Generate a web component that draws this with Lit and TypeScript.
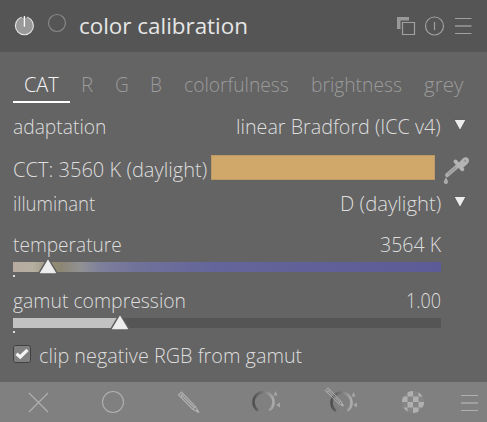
import { LitElement, html, css, svg } from "lit";
import { customElement, property } from "lit/decorators.js";

/** A line of text condensed to an exact advance width. */
@customElement("fit-text")
class FitText extends LitElement {
  @property({ type: Number }) w = 0;
  @property() text = "";
  static styles = css`
    :host { display: block; flex: none; white-space: nowrap; }
    .box { display: block; }
    .ink { display: inline-block; transform-origin: 0 50%; }
  `;
  async updated() {
    await document.fonts.ready;
    const ink = this.renderRoot.querySelector(".ink") as HTMLElement;
    if (ink.offsetWidth) ink.style.transform = `scaleX(${this.w / ink.offsetWidth})`;
  }
  render() {
    return html`<span class="box" style="width:${this.w}px"><span class="ink">${this.text}</span></span>`;
  }
}

const fit = (text: string, w: number, cls = "") =>
  html`<fit-text class=${cls} .w=${w} .text=${text}></fit-text>`;

const tabs: [string, number, number][] = [
  ["CAT", 35, 11], ["R", 12, 11], ["G", 14, 10.5], ["B", 12, 11],
  ["colorfulness", 105, 11], ["brightness", 91, 11], ["grey", 39, 11],
];

const pencil = svg`<g fill="none"><path d="M2 5 5 2 19 16.5 22 22 16.5 19.5Z"/><path d="M4 7 7 4M4.5 4.5 18 18M16.5 19.5 19 16.5"/><path d="M20 20 22 22" stroke-width="2"/></g>`;

const squares: number[][] = [];
for (let r = 0; r < 4; r++) for (let c = 0; c < 4; c++) if ((r + c) % 2 === 1) squares.push([c, r]);

@customElement("app-root")
class AppRoot extends LitElement {
  static styles = css`
    :host {
      display: flex; flex-direction: column; width: 487px; height: 422px; overflow: hidden;
      background: #646464; color: #dedede;
      font: 300 20.5px/28px "Open Sans", "Noto Sans", sans-serif;
    }
    svg { display: block; flex: none; }
    header { height: 52px; box-sizing: border-box; background: #555; display: flex; align-items: flex-start; padding: 0 14px; }
    .power { margin-top: 14px; }
    .mask { margin: 12px 12px 0 12px; }
    .title { font-size: 22px; font-weight: 400; line-height: 28px; color: #e6e6e6; margin-top: 11px; }
    .actions { margin: 16px 0 0 auto; }
    main { flex: 1; padding: 18px 46px 0 13px; display: flex; flex-direction: column; }
    nav { display: flex; height: 33px; color: #9b9b9b; margin-right: -46px; flex: none; }
    .tab { box-sizing: border-box; height: 33px; flex: none; }
    .active { color: #f4f4f4; border-bottom: 2px solid #fff; }
    .row { display: flex; justify-content: space-between; height: 28px; position: relative; flex: none; }
    .adapt { margin-top: 9px; }
    .cct { margin-top: 15px; justify-content: flex-start; }
    .illum { margin-top: 6px; }
    .temp { margin-top: 13px; }
    .gamut { margin-top: 9px; }
    .arrow { position: absolute; left: 440px; top: 7px; }
    .swatch { box-sizing: border-box; width: 224px; height: 25px; background: #d0a869; border: 1px solid #bc9b68; margin-left: 4px; }
    .picker { position: absolute; left: 430px; top: 0; }
    .slider { position: relative; height: 19px; flex: none; display: block; }
    .track { height: 10px; margin-top: 4px; background: #555; }
    .spectrum { background: linear-gradient(90deg, #b8aaa0 0, #b5afa0 20px, #918b73 42px, #8b8573 48px, #929294 67px, #7d7f9b 88px, #71729a 125px, #64659a 200px, #5d5b97 428px); }
    .filled { background: linear-gradient(90deg, #c2c2c2 107px, #555 107px); }
    .dot { width: 2px; height: 2px; background: #ddd; margin-top: 3px; }
    .slider::before { content: ""; display: table; }
    .marker { position: absolute; top: -1px; }
    .m1 { left: 24px; }
    .m2 { left: 96px; }
    .clip { display: flex; margin-top: 8px; flex: none; }
    .check { margin: 4px 8px 0 0; }
    footer { height: 40px; background: #808080; flex: none; }
  `;
  arrow() {
    return html`<svg class="arrow" width="14" height="13" viewBox="0 0 14 13"><path d="M1 .5H13L7 11.5Z" fill="#ececec" stroke="#505050" stroke-width=".8"/></svg>`;
  }
  marker(cls: string) {
    return html`<svg class="marker ${cls}" width="22" height="18" viewBox="0 0 22 18"><path d="M11 .8 20.700 17H1.300Z" fill="#ededed" stroke="#616161" stroke-width="1.500"/></svg>`;
  }
  render() {
    return html`
      <header>
        <svg class="power" width="21" height="22" viewBox="0 0 21 22"><circle cx="10.4" cy="11.8" r="9" fill="#999" stroke="#e4e4e4" stroke-width="1.1"/><path d="M10.4 1V4" stroke="#555" stroke-width="5"/><path d="M7.8 3.6H13V13H7.8Z" fill="#999"/><path d="M10.4 2V12.7" stroke="#fafafa" stroke-width="1.3"/></svg>
        <svg class="mask" width="20" height="22" viewBox="0 0 20 22"><circle cx="10" cy="11" r="8.5" fill="none" stroke="#888" stroke-width="1.2"/></svg>
        ${fit("color calibration", 169, "title")}
        <svg class="actions" width="77" height="21" viewBox="0 0 77 21" fill="none" stroke="#a0a0a0" stroke-width="1.2"><path d="M1 1H13V4.500H4.500V13H1Z" fill="#999" stroke="none"/><path d="M6.5 6.5H18.5V18.5H6.5Z"/><circle cx="38.5" cy="10" r="9"/><path d="M38.5 6V14M59 2.5H75.500M59 17.500H75.500"/><path d="M59 10H75.500" stroke="#888" stroke-width="2"/></svg>
      </header>
      <main>
        <nav>
          ${tabs.map(([t, w, p], i) => html`<div class="tab ${i === 0 ? "active" : ""}" style="padding:0 ${p}px">${fit(t, w)}</div>`)}
        </nav>
        <div class="row adapt">${fit("adaptation", 93)}${fit("linear Bradford (ICC v4)", 205)}${this.arrow()}</div>
        <div class="row cct">${fit("CCT: 3560 K (daylight)", 194)}<div class="swatch"></div>
          <svg class="picker" width="28" height="31" viewBox="0 0 28 31"><path d="M4.200 20 14 11.500" stroke="#aeaeae" stroke-width="4.200" stroke-linecap="round"/><path d="M5 19.300 13 12.300" stroke="#9c9c9c" stroke-width="1.600"/><path d="M12.500 6.500 19.300 14.200" stroke="#b4b4b4" stroke-width="4" stroke-linecap="round"/><path d="M14.500 9 20 3.200C22.500 1 26.300 2.500 26 6 25.800 7.500 24.500 9.500 19 13.500Z" fill="#b4b4b4"/><path d="M21 5 23.200 6.500" stroke="#999" stroke-width="2"/><path d="M3 22C4 24.500 5.200 25.500 5 27.200 4.600 29.600 1.200 29.600 .800 27.200 .600 25.500 2 24.500 3 22Z" fill="#aaa"/></svg>
        </div>
        <div class="row illum">${fit("illuminant", 82.5)}${fit("D (daylight)", 101)}${this.arrow()}</div>
        <div class="row temp">${fit("temperature", 109)}${fit("3564 K", 61)}</div>
        <div class="slider"><div class="track spectrum"></div><div class="dot"></div>${this.marker("m1")}</div>
        <div class="row gamut">${fit("gamut compression", 173)}${fit("1.00", 35)}</div>
        <div class="slider"><div class="track filled"></div><div class="dot"></div>${this.marker("m2")}</div>
        <div class="clip">
          <svg class="check" width="18" height="18" viewBox="0 0 18 18"><rect x=".500" y=".500" width="17" height="17" rx="2" fill="#808080" stroke="#414141"/><path d="M3.500 8.800 7.200 12 14.500 4.800" fill="none" stroke="#f4f4f4" stroke-width="3.200"/></svg>
          ${fit("clip negative RGB from gamut", 263)}
        </div>
      </main>
      <footer>
        <svg width="487" height="40" viewBox="0 0 487 40" fill="none" stroke="#b0b0b0" stroke-width="1.100">
          <defs>
            <linearGradient id="ring" x1="0" x2="1"><stop stop-color="#505050"/><stop offset=".5" stop-color="#7a7a7a"/><stop offset="1" stop-color="#acacac"/></linearGradient>
            <clipPath id="disc"><circle cx="413" cy="20" r="11"/></clipPath>
          </defs>
          <path d="M29 11 48 30M48 11 29 30"/><circle cx="113" cy="20" r="10.500"/>
          <g transform="translate(176.500 8)">${pencil}</g>
          <g stroke="url(#ring)" stroke-width="2.600"><path d="M258 28.500A10 10 0 1 1 269 28.500"/><path d="M336 29A10 10 0 1 1 347 29"/></g>
          <g fill="#a6a6a6" stroke="none"><path d="M273.500 13.500 277.500 13.500 275.500 9ZM276 23 280 20.500V25.500ZM351.500 14.500H355.500L353.500 10ZM353 23 357 20.500V25.500Z"/></g>
          <g transform="translate(323.500 4) scale(.9)">${pencil}</g>
          <g clip-path="url(#disc)" stroke="none"><rect x="402" y="9" width="22" height="22" fill="#868686"/>${squares.map(([c, r]) => svg`<rect x=${402 + c * 5.5} y=${9 + r * 5.5} width="5.5" height="5.5" fill="#b0b0b0"/>`)}</g>
          <path d="M461 13.500H478M461 28.500H478"/><path d="M461 21H478" stroke="#a0a0a0" stroke-width="2"/>
        </svg>
      </footer>`;
  }
}
